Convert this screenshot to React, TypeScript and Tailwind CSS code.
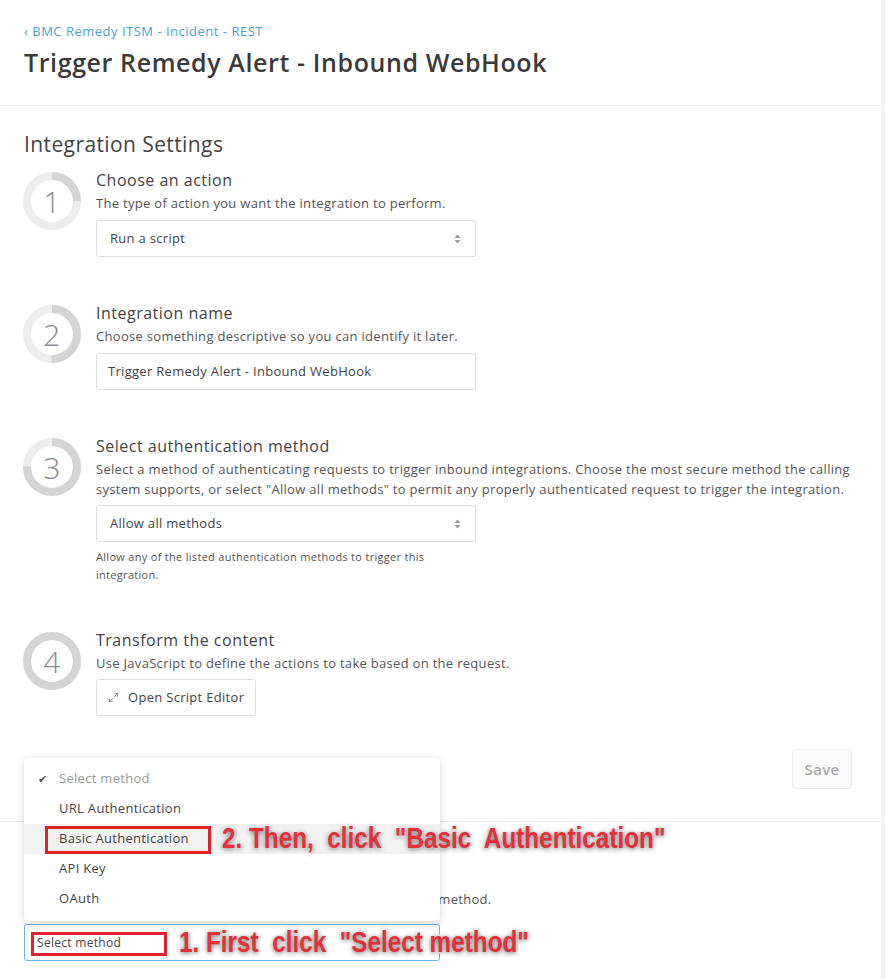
import React from 'react';
import { Maximize2 } from 'lucide-react';

const font = "font-['Open_Sans','Liberation_Sans',sans-serif]";

function Ring({ n, pct }: { n: number; pct: number }) {
  const r = 25;
  const c = 2 * Math.PI * r;
  return (
    <div className="relative w-[60px] h-[60px] shrink-0">
      <svg width="60" height="60" viewBox="0 0 60 60">
        <circle cx="30" cy="30" r={r} fill="none" stroke="#ededed" strokeWidth="8" />
        <circle
          cx="30"
          cy="30"
          r={r}
          fill="none"
          stroke="#d4d4d4"
          strokeWidth="8"
          strokeDasharray={`${c * pct} ${c}`}
          transform="rotate(-90 30 30)"
        />
      </svg>
      <div className="absolute inset-0 flex items-center justify-center text-[30px] font-light text-[#8a8a8a]">{n}</div>
    </div>
  );
}

function UpDown() {
  return (
    <svg width="7" height="10" viewBox="0 0 7 10">
      <path d="M3.5 0.5 L6.5 4 L0.5 4 Z" fill="#999" />
      <path d="M3.5 9.5 L6.5 6 L0.5 6 Z" fill="#999" />
    </svg>
  );
}

function Step({ n, pct, title, children }: { n: number; pct: number; title: string; children: React.ReactNode }) {
  return (
    <div className="flex gap-[14px] mb-[46px]">
      <div className="-ml-[2px] mt-[1px]">
        <Ring n={n} pct={pct} />
      </div>
      <div className="flex-1">
        <h3 className="text-[16px] leading-[20px] tracking-[0.5px] text-[#444]">{title}</h3>
        {children}
      </div>
    </div>
  );
}

const annot =
  "whitespace-pre font-bold text-[30px] leading-[34px] tracking-normal text-[#e5303a] origin-left scale-x-[0.81] font-['Liberation_Sans',sans-serif] [-webkit-text-stroke:3px_white] [paint-order:stroke_fill] [text-shadow:0_1px_6px_rgba(0,0,0,0.6)]";

export default function App() {
  return (
    <div className={`flex bg-white tracking-[0.3px] ${font}`}>
      <div className="w-[881px] min-h-[979px]">
        {/* Header */}
        <div className="px-[24px] pt-[22px] pb-[28px] border-b border-[#ececec]">
          <div className="text-[13px] leading-[18px] tracking-[0.5px] text-[#4aa2c9]">‹ BMC Remedy ITSM - Incident - REST</div>
          <h1 className="mt-[8px] text-[25px] leading-[29px] font-semibold tracking-[0.6px] text-[#3a3a3a]">
            Trigger Remedy Alert - Inbound WebHook
          </h1>
        </div>

        {/* Settings */}
        <div className="pl-[24px] pr-[29px] pt-[25px] border-b border-[#ececec] pb-[32px]">
          <h2 className="text-[21px] leading-[26px] tracking-[0.4px] text-[#444] mb-[13px]">Integration Settings</h2>

          <Step n={1} pct={0.25} title="Choose an action">
            <p className="mt-[3px] text-[13px] leading-[20px] text-[#555]">The type of action you want the integration to perform.</p>
            <div className="mt-[7px] w-[380px] h-[37px] border border-[#ddd] rounded-[3px] flex items-center justify-between pl-[13px] pr-[14px] text-[13px] text-[#444]">
              <span>Run a script</span>
              <UpDown />
            </div>
          </Step>

          <Step n={2} pct={0.5} title="Integration name">
            <p className="mt-[3px] text-[13px] leading-[20px] text-[#555]">Choose something descriptive so you can identify it later.</p>
            <div className="mt-[7px] w-[380px] h-[37px] border border-[#ddd] rounded-[3px] flex items-center pl-[11px] text-[13px] text-[#444]">
              Trigger Remedy Alert - Inbound WebHook
            </div>
          </Step>

          <Step n={3} pct={0.75} title="Select authentication method">
            <p className="mt-[3px] text-[13px] leading-[20px] text-[#555]">
              Select a method of authenticating requests to trigger inbound integrations. Choose the most secure method the calling system supports, or select "Allow all methods" to permit any properly authenticated request to trigger the integration.
            </p>
            <div className="mt-[6px] w-[380px] h-[37px] border border-[#ddd] rounded-[3px] flex items-center justify-between pl-[13px] pr-[14px] text-[13px] text-[#444]">
              <span>Allow all methods</span>
              <UpDown />
            </div>
            <p className="mt-[6px] w-[340px] text-[11px] leading-[18px] text-[#555]">
              Allow any of the listed authentication methods to trigger this integration.
            </p>
          </Step>

          <Step n={4} pct={1} title="Transform the content">
            <p className="mt-[3px] text-[13px] leading-[20px] text-[#555]">Use JavaScript to define the actions to take based on the request.</p>
            <button className="mt-[6px] h-[37px] px-[11px] border border-[#ddd] rounded-[3px] flex items-center gap-[9px] text-[13px] text-[#444]">
              <Maximize2 className="w-[11px] h-[11px] text-[#888]" strokeWidth={2} />
              Open Script Editor
            </button>
          </Step>

          <div className="flex justify-end -mt-[13px]">
            <button className="w-[60px] h-[40px] rounded-[3px] border border-[#eee] bg-[#fafafa] text-[15px] font-semibold text-[#aaa]">Save</button>
          </div>
        </div>

        {/* Lower section with open dropdown */}
        <div className="px-[24px] pt-[19px]">
          <h3 className="text-[16px] leading-[20px] text-[#444]">Authentication</h3>
          <p className="mt-[28px] text-[13px] leading-[20px] text-[#555]">
            Requests that trigger this integration must authenticate with this method.
          </p>
          <div className="relative mt-[15px] w-[416px]">
            {/* dropdown menu */}
            <div className="absolute left-0 bottom-full mb-[3px] w-[416px] bg-white rounded-[4px] shadow-[0_2px_8px_rgba(0,0,0,0.18)] pt-[6px] pb-[7px] text-[13px] z-10">
              <div className="h-[30px] flex items-center pl-[14px] text-[#999]">
                <span className="w-[21px] text-[11px] text-[#555]">✔</span>Select method
              </div>
              <div className="h-[30px] flex items-center pl-[35px] text-[#444]">URL Authentication</div>
              <div className="relative h-[30px] flex items-center pl-[35px] text-[#444] bg-[#f2f2f2]">
                Basic Authentication
                <div className="absolute left-[21px] top-[2px] w-[166px] h-[28px] border-[3px] border-[#e0222e]" />
                <div className={`absolute left-[198px] top-[-3px] ${annot}`}>2. Then,  click  "Basic  Authentication"</div>
              </div>
              <div className="h-[30px] flex items-center pl-[35px] text-[#444]">API Key</div>
              <div className="h-[30px] flex items-center pl-[35px] text-[#444]">OAuth</div>
            </div>
            {/* select */}
            <div className="relative h-[37px] border border-[#6bb8e0] rounded-[3px] flex items-center pl-[12px] text-[12px] text-[#444]">
              Select method
              <div className="absolute left-[6px] top-[7px] w-[136px] h-[24px] border-[3px] border-[#e0222e]" />
              <div className={`absolute left-[154px] top-[0px] ${annot}`}>1. First  click  "Select method"</div>
            </div>
          </div>
        </div>
      </div>
      <div className="w-[4px] bg-[#f3f3f3]" />
    </div>
  );
}
